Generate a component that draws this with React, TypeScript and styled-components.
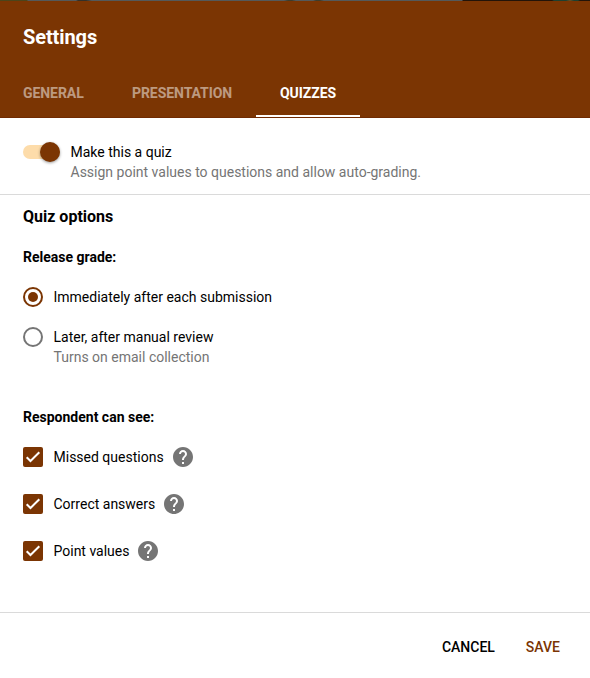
import React from "react";
import styled, { createGlobalStyle } from "styled-components";

const brown = "#7b3503";

const GlobalStyle = createGlobalStyle`
  *, *::before, *::after { box-sizing: border-box; }
  body { margin: 0; background: #fff; }
`;

const Dialog = styled.div`
  width: 590px;
  height: 678px;
  display: flex;
  flex-direction: column;
  overflow: hidden;
  background: #fff;
  color: #000;
  font-family: Roboto, "Liberation Sans", sans-serif;
  font-size: 14px;
  line-height: 20px;
`;

const Backdrop = styled.div`
  height: 1px;
  flex: none;
  background: linear-gradient(
    90deg,
    #4b451b 0 27px, #54595a 28px 76px, #33312a 78px 86px, #54595a 92px 284px,
    #3d3d2d 288px 292px, #54595a 296px 313px, #3d3d2d 316px 320px, #54595a 324px 462px,
    #231409 463px 552px, #1e4030 554px 566px, #655027 570px, #1e4030 574px 578px, #231409 580px
  );
`;

const Header = styled.header`
  height: 117px;
  flex: none;
  display: flex;
  flex-direction: column;
  background: ${brown};
  border-bottom: 1px solid #702b02;
  color: #fff;
`;

const Title = styled.h1`
  margin: 24px 0 0 23px;
  font-size: 20px;
  line-height: 24px;
  font-weight: 700;
  letter-spacing: -0.1px;
`;

const Tabs = styled.nav`
  display: flex;
  height: 48px;
  margin-top: auto;
`;

const Tab = styled.button<{ $width: number; $active?: boolean }>`
  width: ${(p) => p.$width}px;
  padding: 2px 0 0 24px;
  border: 0;
  border-bottom: 2px solid ${(p) => (p.$active ? "#fff" : "transparent")};
  background: none;
  color: ${(p) => (p.$active ? "#fff" : "rgba(255, 255, 255, 0.5)")};
  font: 700 14px/20px Roboto, sans-serif;
  letter-spacing: -0.06px;
  text-align: left;
  white-space: nowrap;
  &:first-child { padding-left: 23px; }
`;

const QuizToggle = styled.section`
  height: 77px;
  flex: none;
  display: flex;
  align-items: flex-start;
  padding: 24px 23px 0;
  border-bottom: 1px solid #dadada;
`;

const Switch = styled.span`
  width: 37px;
  height: 14px;
  margin: 3px 10.5px 0 0;
  border-radius: 7px;
  background: #fddcaa;
  display: flex;
  align-items: center;
  justify-content: flex-end;
`;

const Thumb = styled.span`
  width: 20px;
  height: 20px;
  flex: none;
  border-radius: 50%;
  background: ${brown};
  box-shadow: 0 1px 3px rgba(0, 0, 0, 0.4);
`;

const Label = styled.div`
  white-space: nowrap;
`;

const Hint = styled(Label)`
  color: #757575;
`;

const Options = styled.main`
  flex: 1;
  padding: 12px 23px 0;
`;

const SectionTitle = styled.h2`
  margin: 0;
  font-size: 16px;
  line-height: 20px;
  font-weight: 700;
`;

const GroupTitle = styled.h3<{ $top: number }>`
  margin: ${(p) => p.$top}px 0 20px;
  font-size: 14px;
  line-height: 20px;
  font-weight: 700;
`;

const Row = styled.div<{ $gap: number }>`
  display: flex;
  align-items: flex-start;
  margin-bottom: ${(p) => p.$gap}px;
`;

const Radio = styled.span<{ $on?: boolean }>`
  width: 20px;
  height: 20px;
  flex: none;
  margin-right: 10.5px;
  display: grid;
  place-items: center;
  border: 2px solid ${(p) => (p.$on ? brown : "#757575")};
  border-radius: 50%;
  &::after {
    content: "";
    width: 10px;
    height: 10px;
    border-radius: 50%;
    background: ${(p) => (p.$on ? brown : "transparent")};
  }
`;

const CheckBox = styled.span`
  width: 20px;
  height: 20px;
  flex: none;
  margin-right: 10.5px;
  border-radius: 2px;
  background: ${brown};
  svg { display: block; }
`;

const CheckLabel = styled(Label)<{ $width: number }>`
  width: ${(p) => p.$width}px;
`;

const HelpSvg = styled.svg`
  display: block;
  flex: none;
`;

const Footer = styled.footer`
  height: 66px;
  flex: none;
  display: flex;
  align-items: flex-start;
  justify-content: flex-end;
  gap: 31px;
  padding: 24px 30px 0 0;
  border-top: 1px solid #dadada;
`;

const Action = styled.button<{ $accent?: boolean }>`
  padding: 0;
  border: 0;
  background: none;
  color: ${(p) => (p.$accent ? brown : "#000")};
  font: 500 14px/20px Roboto, sans-serif;
`;

const Help = () => (
  <HelpSvg width="20" height="20" viewBox="2 2 20 20">
    <path
      fill="#757575"
      d="M12 2C6.48 2 2 6.48 2 12s4.48 10 10 10 10-4.48 10-10S17.52 2 12 2zm1 17h-2v-2h2v2zm2.07-7.75-.9.92C13.45 12.9 13 13.5 13 15h-2v-.5c0-1.1.45-2.1 1.17-2.83l1.24-1.26c.37-.36.59-.86.59-1.41 0-1.1-.9-2-2-2s-2 .9-2 2H8c0-2.21 1.79-4 4-4s4 1.79 4 4c0 .88-.36 1.68-.93 2.25z"
    />
  </HelpSvg>
);

const checks = [
  { text: "Missed questions", width: 119.5 },
  { text: "Correct answers", width: 110.5 },
  { text: "Point values", width: 84.5 },
];

export default function App() {
  return (
    <>
      <GlobalStyle />
      <Dialog>
        <Backdrop />
        <Header>
          <Title>Settings</Title>
          <Tabs>
            <Tab $width={108}>GENERAL</Tab>
            <Tab $width={148}>PRESENTATION</Tab>
            <Tab $width={104} $active>QUIZZES</Tab>
          </Tabs>
        </Header>
        <QuizToggle>
          <Switch><Thumb /></Switch>
          <div>
            <Label>Make this a quiz</Label>
            <Hint>Assign point values to questions and allow auto-grading.</Hint>
          </div>
        </QuizToggle>
        <Options>
          <SectionTitle>Quiz options</SectionTitle>
          <GroupTitle $top={20}>Release grade:</GroupTitle>
          <Row $gap={20}>
            <Radio $on />
            <Label>Immediately after each submission</Label>
          </Row>
          <Row $gap={0}>
            <Radio />
            <div>
              <Label>Later, after manual review</Label>
              <Hint>Turns on email collection</Hint>
            </div>
          </Row>
          <GroupTitle $top={40}>Respondent can see:</GroupTitle>
          {checks.map((c) => (
            <Row $gap={27} key={c.text}>
              <CheckBox>
                <svg width="20" height="20" viewBox="0 0 20 20">
                  <path d="M3.7 10.2 7.5 14 16.3 5.2" fill="none" stroke="#fff" strokeWidth="2" />
                </svg>
              </CheckBox>
              <CheckLabel $width={c.width}>{c.text}</CheckLabel>
              <Help />
            </Row>
          ))}
        </Options>
        <Footer>
          <Action>CANCEL</Action>
          <Action $accent>SAVE</Action>
        </Footer>
      </Dialog>
    </>
  );
}
